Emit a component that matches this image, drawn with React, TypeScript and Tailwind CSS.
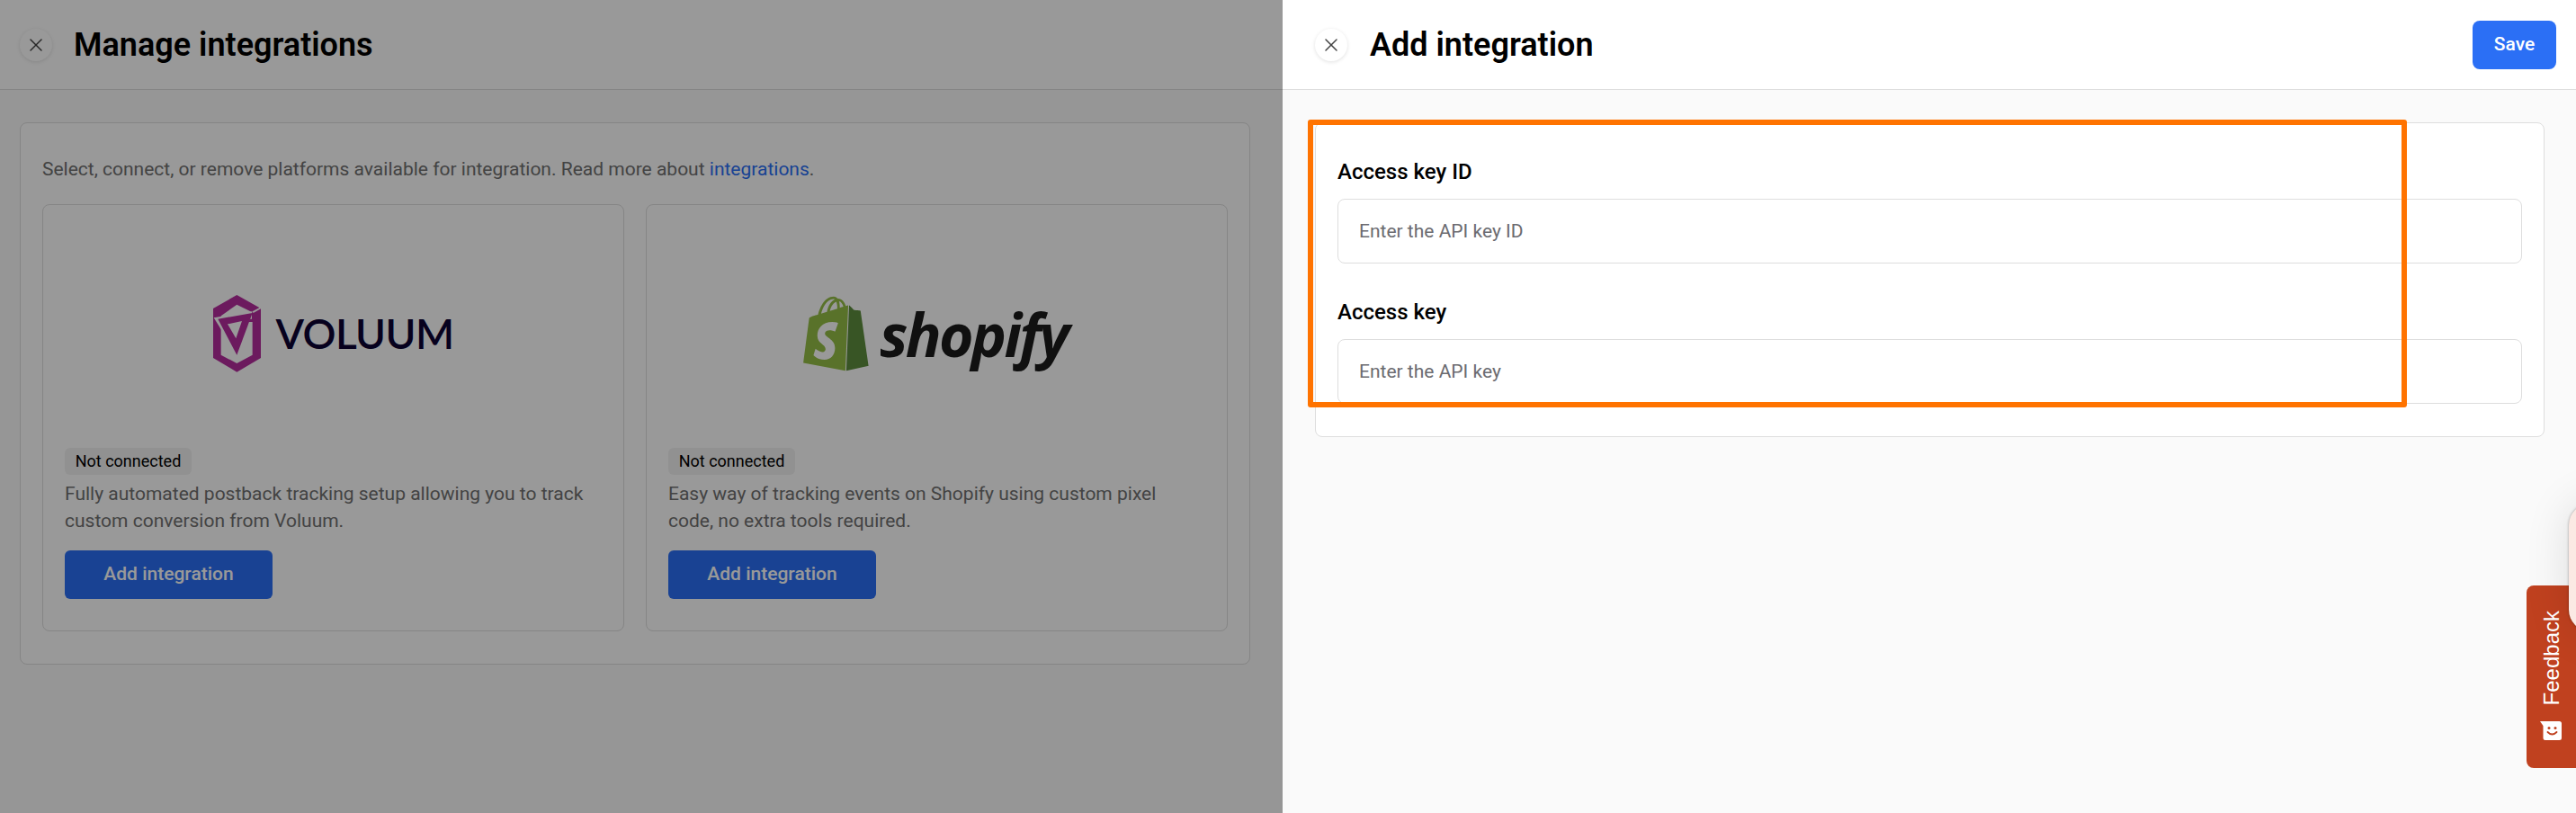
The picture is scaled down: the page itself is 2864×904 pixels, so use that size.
import React from 'react';
import { X } from 'lucide-react';

const VoluumLogo = () => (
  <div className="flex items-center gap-[17px]">
    <svg width="53" height="86" viewBox="0 0 159 258">
      <path d="M79 0 159 45V210L79 257 0 210V45Z" fill="#b42c9d" />
      <path d="M26 90H131V200L79 228 26 200Z" fill="#fff" />
      <path d="M26 70 79 32 129 57V80H26Z" fill="#fff" />
      <path d="M2 76 131 55 79 200Z" fill="#fff" />
      <path d="M131 55 159 40V46L134 60Z" fill="#fff" />
      <path d="M16 80 131 60 79 200Z" fill="#b42c9d" />
      <path d="M48 97 96 87 76 145Z" fill="#fff" />
    </svg>
    <span className="font-['Lato',sans-serif] text-[46px] leading-none font-semibold tracking-[-0.6px] text-[#0c0233]">VOLUUM</span>
  </div>
);

const ShopifyLogo = () => (
  <div className="mr-[3px] flex items-center gap-[12px]">
    <svg width="73" height="84" viewBox="1.4 0 21.2 24">
      <path
        fill="#95bf47"
        d="M11.71 11.305s-.81-.424-1.774-.424c-1.447 0-1.504.906-1.504 1.141 0 1.232 3.24 1.715 3.24 4.629 0 2.295-1.44 3.76-3.406 3.76-2.354 0-3.54-1.465-3.54-1.465l.646-2.086s1.245 1.066 2.28 1.066c.675 0 .975-.545.975-.932 0-1.619-2.654-1.694-2.654-4.359-.034-2.237 1.571-4.416 4.827-4.416 1.257 0 1.875.361 1.875.361l-.945 2.715-.02.01zM11.17.83c.136 0 .271.038.405.135-.984.465-2.064 1.639-2.508 3.992-.656.213-1.293.405-1.889.578C7.697 3.75 8.951.84 11.17.84V.83zm1.235 2.949v.135c-.754.232-1.583.484-2.394.736.466-1.777 1.333-2.645 2.085-2.971.193.501.309 1.176.309 2.1zm.539-2.234c.694.074 1.141.867 1.429 1.755-.349.114-.735.231-1.158.366v-.252c0-.752-.096-1.371-.271-1.871v.002zm2.992 1.289c-.02 0-.06.021-.078.021s-.289.075-.714.21c-.423-1.233-1.176-2.37-2.508-2.37h-.115C12.135.209 11.669 0 11.265 0 8.159 0 6.675 3.877 6.21 5.846c-1.194.365-2.063.636-2.16.674-.675.213-.694.232-.772.87-.075.462-1.83 14.063-1.83 14.063L15.009 24l.927-21.166z"
      />
      <path
        fill="#5e8e3e"
        d="M15.337 23.979l7.216-1.561s-2.604-17.613-2.625-17.73c-.018-.116-.114-.192-.211-.192s-1.929-.136-1.929-.136-1.275-1.274-1.439-1.411c-.045-.037-.075-.057-.121-.074l-.914 21.104h.023z"
      />
    </svg>
    <span className="font-['Open_Sans',sans-serif] text-[66px] leading-none font-bold italic tracking-[-2.7px] text-[#1c1c1c]">shopify</span>
  </div>
);

const IntegrationCard = ({ logo, text }: { logo: React.ReactNode; text: React.ReactNode }) => (
  <div className="flex h-[475px] flex-col rounded-lg border border-[#dedede] bg-white px-[24px] pb-[35px]">
    <div className="flex h-[270px] items-center justify-center pt-[16px]">{logo}</div>
    <span className="h-[30px] w-[141px] rounded-md bg-[#f2f2f2] text-center text-[18px] leading-[30px] text-black">Not connected</span>
    <p className="mt-[6px] text-[21px] leading-[30px] text-[#717171]">{text}</p>
    <button className="mt-[18px] h-[54px] w-[231px] rounded-md bg-[#2b6ff5] text-[21px] font-medium text-white">Add integration</button>
  </div>
);

const CloseButton = () => (
  <button className="flex h-9 w-9 items-center justify-center rounded-full bg-white shadow-[0_1px_4px_rgba(0,0,0,0.12)]">
    <X size={24} strokeWidth={1.5} className="text-[#444]" />
  </button>
);

const Field = ({ label, placeholder }: { label: string; placeholder: string }) => (
  <div className="flex flex-col gap-3">
    <label className="text-[24px] leading-9 font-medium text-black">{label}</label>
    <input
      placeholder={placeholder}
      className="h-[72px] rounded-lg border border-[#dedede] bg-white px-[23px] text-[21px] outline-none placeholder:text-[#6b6b70]"
    />
  </div>
);

export default function App() {
  return (
    <div className="relative flex h-[904px] w-[2864px] overflow-hidden bg-[#fafafa] font-['Roboto',sans-serif]">
      {/* page behind the drawer */}
      <div className="relative w-[1426px] shrink-0">
        <header className="flex h-[100px] items-center gap-6 border-b border-[#dedede] bg-white px-[22px]">
          <CloseButton />
          <h1 className="text-[36px] font-semibold text-black">Manage integrations</h1>
        </header>
        <div className="pt-[36px] pr-[36px] pl-[22px]">
          <section className="rounded-lg border border-[#dedede] bg-white px-[24px] py-[36px]">
            <p className="text-[21px] leading-[30px] text-[#717171]">
              Select, connect, or remove platforms available for integration. Read more about{' '}
              <a className="text-[#2b6ff5]">integrations</a>.
            </p>
            <div className="mt-[24px] grid grid-cols-2 gap-6">
              <IntegrationCard
                logo={<VoluumLogo />}
                text="Fully automated postback tracking setup allowing you to track custom conversion from Voluum."
              />
              <IntegrationCard
                logo={<ShopifyLogo />}
                text="Easy way of tracking events on Shopify using custom pixel code, no extra tools required."
              />
            </div>
          </section>
        </div>
        <div className="absolute inset-0 bg-black/40" />
      </div>

      {/* drawer */}
      <div className="flex min-w-0 flex-1 flex-col">
        <header className="flex h-[100px] items-center border-b border-[#dedede] bg-white pr-[22px] pl-[36px]">
          <CloseButton />
          <h2 className="ml-[25px] text-[36px] font-semibold text-black">Add integration</h2>
          <button className="ml-auto h-[54px] w-[93px] rounded-lg bg-[#2b6ff5] text-[21px] font-medium text-white">Save</button>
        </header>
        <div className="pt-[36px] pr-[35px] pl-[36px]">
          <section className="flex flex-col gap-[36px] rounded-lg border border-[#dedede] bg-white px-[24px] py-[36px]">
            <Field label="Access key ID" placeholder="Enter the API key ID" />
            <Field label="Access key" placeholder="Enter the API key" />
          </section>
        </div>
      </div>

      {/* annotation box */}
      <div className="absolute top-[133px] left-[1454px] h-[320px] w-[1222px] rounded-[3px] border-[6px] border-[#ff7300]" />

      {/* feedback tab and the widget peeking in */}
      <div className="absolute top-[651px] right-0 flex h-[203px] w-[55px] flex-col items-center justify-end gap-[18px] rounded-l-lg bg-[#c0411f] pb-[31px] text-white">
        <span className="rotate-180 font-['Liberation_Sans',sans-serif] text-[24px] leading-none [writing-mode:vertical-rl]">Feedback</span>
        <svg width="24" height="21" viewBox="0 0 24 21" className="mr-[1px]">
          <path d="M0 0H21.5Q24 0 24 2.500V18.500Q24 21 21.500 21H6Q3.500 21 3.500 18.500V5Z" fill="#fff" />
          <circle cx="10" cy="7.500" r="1.500" fill="#c0411f" />
          <circle cx="17" cy="7.500" r="1.500" fill="#c0411f" />
          <path d="M8.500 12Q13.500 17 18.500 12" fill="none" stroke="#c0411f" strokeWidth="1.800" strokeLinecap="round" />
        </svg>
      </div>
      <div className="absolute top-[560px] left-[2856px] h-[142px] w-[60px] rounded-l-[24px] bg-[#fbe9e4] shadow-[0_0_3px_rgba(0,0,0,0.35),0_0_50px_rgba(0,0,0,0.12)]" />
    </div>
  );
}
